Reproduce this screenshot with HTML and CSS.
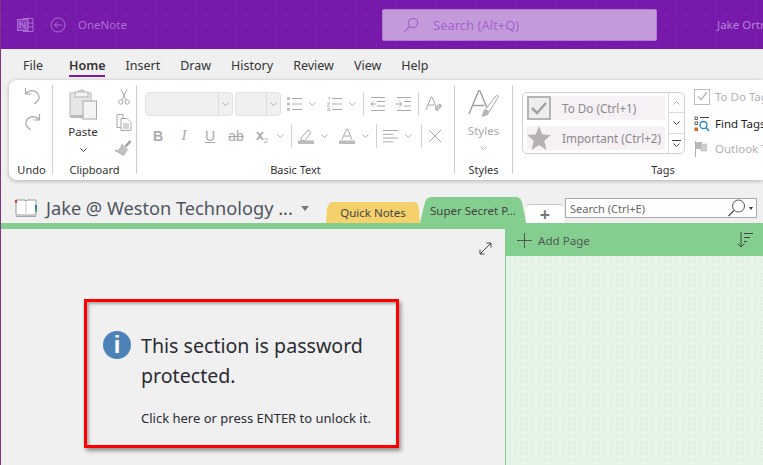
FILE: index.html
```html
<!DOCTYPE html>
<html lang="en">
<head>
    <meta charset="UTF-8">
    <title>OneNote</title>
    <link rel="stylesheet" href="styles.css">
</head>
<body>
    <header class="titlebar">
        <div class="brand">
            <svg class="logo" width="17" height="18" viewBox="0 0 17 18" fill="none" stroke="#a96fd0">
                <path d="M6 2.5h10v13H6" /><path d="M11 2.5v13M11 7h5M11 11h5" />
                <rect x="0.5" y="3.5" width="10" height="11" fill="#8a3cba" />
                <path d="M3 12V6l5 6V6" stroke-width="1.4" />
            </svg>
            <svg class="back" width="16" height="16" viewBox="0 0 16 16" fill="none" stroke="#a96fd0">
                <circle cx="8" cy="8" r="7" /><path d="M12 8H4.5M7.5 5l-3 3 3 3" />
            </svg>
            <span class="app-name">OneNote</span>
        </div>
        <div class="title-search">
            <svg width="16" height="16" viewBox="0 0 16 16" fill="none" stroke="#a461cf" stroke-width="1.2">
                <circle cx="10" cy="6" r="4.6" /><path d="M6.6 9.4L1.5 14.5" />
            </svg>
            <span>Search (Alt+Q)</span>
        </div>
        <span class="user">Jake Ortr</span>
    </header>

    <nav class="menu">
        <span>File</span>
        <span class="active">Home</span>
        <span>Insert</span>
        <span>Draw</span>
        <span>History</span>
        <span>Review</span>
        <span>View</span>
        <span>Help</span>
    </nav>

    <section class="ribbon">
        <div class="group undo">
            <div class="group-body">
                <svg width="17" height="18" viewBox="0 0 17 18" fill="none" stroke="#a8a8a8" stroke-width="1.2">
                    <path d="M1.5 1v6h6" /><path d="M1.5 7C4 3.500 9 2.500 13 5.500c3 3 3 6.500 0 9L10.500 17" />
                </svg>
                <svg width="17" height="18" viewBox="0 0 17 18" fill="none" stroke="#a8a8a8" stroke-width="1.2">
                    <path d="M15.500 1v6h-6" /><path d="M15.500 7C13 3.500 8 2.500 4 5.500c-3 3-3 6.500 0 9L6.500 17" />
                </svg>
            </div>
            <div class="group-label">Undo</div>
        </div>

        <div class="group clipboard">
            <div class="group-body">
                <div class="paste">
                    <svg width="28" height="31" viewBox="0 0 28 31">
                        <path d="M1 4h7l3-3h3l3 3h5v24H1z" fill="#e6e6e6" stroke="#b4b4b4" />
                        <rect x="6" y="3" width="13" height="5" fill="#f3f3f3" stroke="#b4b4b4" />
                        <rect x="2" y="26" width="14" height="3" fill="#b9b9b9" />
                        <rect x="14" y="12" width="13.500" height="18" fill="#f4f4f4" stroke="#a8a8a8" />
                    </svg>
                    <span class="paste-label">Paste</span>
                    <svg class="chev dark" width="7" height="4" viewBox="0 0 7 4"><path d="M.5.500l3 3 3-3" /></svg>
                </div>
                <div class="clip-tools">
                    <svg width="12" height="17" viewBox="0 0 12 17" fill="none" stroke="#a8a8a8">
                        <path d="M3 1l5 11M9 1L4 12" /><circle cx="2.800" cy="14" r="2.200" /><circle cx="9.200" cy="14" r="2.200" />
                    </svg>
                    <svg width="16" height="17" viewBox="0 0 16 17" fill="#fff" stroke="#a8a8a8">
                        <path d="M1 .5h6v13H1z" /><path d="M5 4.500h6l4 4v8H5z" /><path d="M7 10h6M7 12h6M7 14h6" />
                    </svg>
                    <svg width="17" height="16" viewBox="0 0 17 16">
                        <path d="M10.500 6.500L15.500 1" stroke="#a0a0a0" stroke-width="2.600" fill="none" />
                        <path d="M7 4.500l5.500 5L8.500 15.500 0 10.500c3 .5 5.500-1.500 7-6z" fill="#c8c8c8" stroke="#a8a8a8" stroke-width=".8" />
                        <path d="M4 12l4-4M7 14l3-4" stroke="#a8a8a8" stroke-width=".7" />
                    </svg>
                </div>
            </div>
            <div class="group-label">Clipboard</div>
        </div>

        <div class="group basic">
            <div class="group-body">
                <div class="tool-row top">
                    <div class="cluster combos">
                        <div class="combo wide"><i><svg class="chev" width="7" height="4" viewBox="0 0 7 4"><path d="M.5.500l3 3 3-3" /></svg></i></div>
                        <div class="combo narrow"><i><svg class="chev" width="7" height="4" viewBox="0 0 7 4"><path d="M.5.500l3 3 3-3" /></svg></i></div>
                    </div>
                    <div class="cluster">
                        <div class="split">
                            <svg width="15" height="14" viewBox="0 0 15 14" fill="none" stroke="#a8a8a8">
                                <path d="M5 1.500h10M5 7h10M5 12.500h10" /><path d="M0 1.500h3M0 7h3M0 12.500h3" stroke-width="2.600" stroke="#b8b8b8" />
                            </svg>
                            <svg class="chev" width="7" height="4" viewBox="0 0 7 4"><path d="M.5.500l3 3 3-3" /></svg>
                        </div>
                        <div class="split">
                            <svg width="15" height="14" viewBox="0 0 15 14" fill="none" stroke="#a8a8a8">
                                <path d="M5 1.500h10M5 7h10M5 12.500h10" /><path d="M1 .5h1.500v3M0 6h3L0 9h3M0 11h3l-1 1.200 1 1.300H0" stroke-width=".7" />
                            </svg>
                            <svg class="chev" width="7" height="4" viewBox="0 0 7 4"><path d="M.5.500l3 3 3-3" /></svg>
                        </div>
                    </div>
                    <span class="sep"></span>
                    <div class="cluster">
                        <svg width="15" height="14" viewBox="0 0 15 14" fill="none" stroke="#a8a8a8">
                            <path d="M1 .5h14M7 4.500h8M7 9h8M1 13.500h14M6 7H1M3.500 4.500L1 7l2.500 2.500" />
                        </svg>
                        <svg width="15" height="14" viewBox="0 0 15 14" fill="none" stroke="#a8a8a8">
                            <path d="M1 .5h14M8 4.500h7M8 9h7M1 13.500h14M0 7h6M3.500 4.500L6 7 3.500 9.500" />
                        </svg>
                    </div>
                    <span class="sep"></span>
                    <svg width="17" height="16" viewBox="0 0 17 16" fill="none" stroke="#a8a8a8">
                        <path d="M1 14L6 1h1l4 10M3 9h6" /><path d="M10 12l5-4 1.500 2-4 4.500h-1z" fill="#ccc" />
                    </svg>
                </div>
                <div class="tool-row">
                    <span class="fmt bold">B</span>
                    <span class="fmt italic">I</span>
                    <span class="fmt under">U</span>
                    <span class="fmt strike">ab</span>
                    <span class="fmt bold sub">x<small>2</small></span>
                    <svg class="chev after-sub" width="7" height="4" viewBox="0 0 7 4"><path d="M.5.500l3 3 3-3" /></svg>
                    <span class="sep tall"></span>
                    <div class="split">
                        <svg width="16" height="16" viewBox="0 0 16 16">
                            <path d="M3 10l7-8 3 2.500-6 8H3z" fill="none" stroke="#a8a8a8" />
                            <rect y="12.500" width="16" height="3.500" fill="#bcbcbc" />
                        </svg>
                        <svg class="chev" width="7" height="4" viewBox="0 0 7 4"><path d="M.5.500l3 3 3-3" /></svg>
                    </div>
                    <div class="split font-color">
                        <svg width="16" height="16" viewBox="0 0 16 16">
                            <path d="M3 11.500L7.500 1h1L13 11.500M5 8h6" fill="none" stroke="#a8a8a8" />
                            <rect y="12.500" width="16" height="3.500" fill="#bcbcbc" />
                        </svg>
                        <svg class="chev" width="7" height="4" viewBox="0 0 7 4"><path d="M.5.500l3 3 3-3" /></svg>
                    </div>
                    <span class="sep tall"></span>
                    <div class="split align">
                        <svg width="15" height="14" viewBox="0 0 15 14" fill="none" stroke="#a8a8a8">
                            <path d="M0 1.500h15M0 5.300h10M0 9h15M0 12.800h10" />
                        </svg>
                        <svg class="chev" width="7" height="4" viewBox="0 0 7 4"><path d="M.5.500l3 3 3-3" /></svg>
                    </div>
                    <span class="sep tall"></span>
                    <svg width="14" height="14" viewBox="0 0 14 14" fill="none" stroke="#a8a8a8"><path d="M1 1l12 12M13 1L1 13" /></svg>
                </div>
            </div>
            <div class="group-label">Basic Text</div>
        </div>

        <div class="group styles">
            <div class="group-body">
                <svg width="31" height="29" viewBox="0 0 31 29">
                    <path d="M1 24L10.500 1h1.500l7 17M4.500 15.500h12" fill="none" stroke="#a0a0a0" stroke-width="1.400" />
                    <path d="M17 20L28 6c2-1.500 2.500 0 2 1.500L21 22z" fill="#fff" stroke="#a8a8a8" />
                    <path d="M16 20c3-1 5 .5 5 2.500s-3 4-8 4c2-1.500 1.500-5 3-6.500z" fill="#b4b4b4" />
                </svg>
                <span class="styles-label">Styles</span>
                <svg class="chev" width="7" height="4" viewBox="0 0 7 4"><path d="M.5.500l3 3 3-3" /></svg>
            </div>
            <div class="group-label">Styles</div>
        </div>

        <div class="group tags">
            <div class="group-body">
                <div class="gallery">
                    <div class="gallery-items">
                        <div class="tag-item">
                            <span class="tag-check">
                                <svg width="20" height="20" viewBox="0 0 20 20" fill="none" stroke="#a0a0a0" stroke-width="2.500"><path d="M3 10l5 5 9-10" /></svg>
                            </span>
                            <span>To Do (Ctrl+1)</span>
                        </div>
                        <div class="tag-item">
                            <svg class="tag-star" width="24" height="24" viewBox="0 0 24 24"><path d="M12 0l3.300 8.400 8.700.6-6.700 5.700 2.100 9.300L12 19l-7.400 5 2.100-9.300L0 9l8.700-.6z" fill="#b4b0b4" /></svg>
                            <span>Important (Ctrl+2)</span>
                        </div>
                    </div>
                    <div class="gallery-scroll">
                        <span><svg class="chev" width="7" height="4" viewBox="0 0 7 4"><path d="M.5 3.500l3-3 3 3" /></svg></span>
                        <span><svg class="chev dark" width="7" height="4" viewBox="0 0 7 4"><path d="M.5.500l3 3 3-3" /></svg></span>
                        <span><svg class="more" width="9" height="7" viewBox="0 0 9 7" fill="none" stroke="#444"><path d="M0 .5h9M1.500 3.500L4.500 6.500l3-3" /></svg></span>
                    </div>
                </div>
                <div class="tag-actions">
                    <div class="tag-action off">
                        <span class="mini-check"><svg width="11" height="9" viewBox="0 0 11 9" fill="none" stroke="#b4b4b4" stroke-width="1.300"><path d="M1 4.500l3 3 6-7" /></svg></span>
                        <span>To Do Tag</span>
                    </div>
                    <div class="tag-action find">
                        <svg width="16" height="16" viewBox="0 0 16 16" fill="none">
                            <path d="M6 1.500h9" stroke="#444" /><rect x="1" y="1" width="2.500" height="2.500" stroke="#444" stroke-width=".8" />
                            <rect x="1" y="6" width="2.500" height="2.500" stroke="#444" stroke-width=".8" />
                            <rect x=".5" y="11.500" width="3.500" height="3.500" fill="#d8641e" />
                            <circle cx="9.500" cy="9" r="3.500" stroke="#1c8ad6" stroke-width="1.300" /><path d="M12 11.500l3 3.500" stroke="#1c8ad6" stroke-width="1.500" />
                        </svg>
                        <span>Find Tags</span>
                    </div>
                    <div class="tag-action off">
                        <svg width="16" height="16" viewBox="0 0 16 16">
                            <path d="M1.500 0v16" stroke="#b0b0b0" /><rect x="2" y="1" width="6" height="7" fill="#b8b8b8" /><rect x="7" y="3" width="5.500" height="7" fill="#d0d0d0" stroke="#b8b8b8" stroke-width=".6" />
                        </svg>
                        <span>Outlook Tasks</span>
                    </div>
                </div>
            </div>
            <div class="group-label">Tags</div>
        </div>
    </section>

    <section class="notebook-bar">
        <div class="notebook">
            <svg width="22" height="19" viewBox="0 0 22 19">
                <path d="M1 1h9l1 1 1-1h9v15H12l-1 1-1-1H1z" fill="#fff" stroke="#9a9a9a" />
                <path d="M11 2v15" stroke="#c8c8c8" />
                <rect y="1" width="2" height="3" fill="#d8401e" />
                <rect x="20" y="6" width="2" height="4" fill="#3a78b8" />
                <rect x="20" y="10" width="2" height="3" fill="#58a070" />
                <path d="M1 17.500h20" stroke="#a8a8a8" />
            </svg>
            <span class="notebook-name">Jake @ Weston Technology ...</span>
            <span class="caret"></span>
        </div>
        <div class="tabs">
            <div class="tab yellow">Quick Notes</div>
            <div class="tab green">Super Secret P...</div>
            <div class="tab add">+</div>
        </div>
        <div class="section-search">
            <span>Search (Ctrl+E)</span>
            <svg width="20" height="18" viewBox="0 0 20 18" fill="none" stroke="#555">
                <circle cx="11.500" cy="7" r="6" /><path d="M7 11.500L1.500 17" stroke-width="1.400" />
            </svg>
            <span class="caret small"></span>
        </div>
    </section>

    <main class="workspace">
        <div class="page-area">
            <svg class="expand" width="13" height="13" viewBox="0 0 13 13" fill="none" stroke="#444">
                <path d="M1 12L12 1M7.500 1H12v4.500M1 7.500V12h4.500" />
            </svg>
            <div class="locked">
                <div class="locked-head">
                    <span class="info-icon">i</span>
                    <p>This section is password protected.</p>
                </div>
                <p class="locked-hint">Click here or press ENTER to unlock it.</p>
            </div>
        </div>
        <aside class="pages">
            <div class="pages-head">
                <svg width="15" height="15" viewBox="0 0 15 15" stroke="#555"><path d="M7.500 0v15M0 7.500h15" /></svg>
                <span>Add Page</span>
                <svg class="sort" width="16" height="16" viewBox="0 0 16 16" fill="none" stroke="#444">
                    <path d="M4 0v15M.5 11.500L4 15l3.500-3.500M7 1.500h9M7 5.500h6M7 9.500h3" />
                </svg>
            </div>
        </aside>
    </main>
</body>
</html>
```

FILE: styles.css
```css
:root {
    --purple: #7719aa;
    --green: #84cf8f;
    --line: #cfcfcf;
    --off: #a9a9a9;
}

html, body {
    margin: 0;
    height: 465px;
    overflow: hidden;
}

body {
    width: 762px;
    border-left: 1px solid #85327f;
    background: #f0f0f0;
    font-family: "Noto Sans", "Open Sans", sans-serif;
    font-size: 12px;
    color: #333;
}

p {
    margin: 0;
}

/* title bar */
.titlebar {
    display: flex;
    align-items: center;
    height: 49px;
    overflow: hidden;
    background-color: var(--purple);
    background-image: radial-gradient(rgba(255, 255, 255, 0.1) 0.6px, transparent 0.8px);
    background-size: 10px 10px;
}

.brand {
    display: flex;
    flex-shrink: 0;
    align-items: center;
    width: 381px;
    padding-left: 16px;
    box-sizing: border-box;
}

.back {
    margin-left: 16px;
}

.app-name {
    margin-left: 12px;
    font-size: 11.5px;
    color: #ab70d2;
}

.title-search {
    display: flex;
    flex-shrink: 0;
    align-items: center;
    gap: 14px;
    width: 275px;
    height: 32px;
    padding-left: 20px;
    box-sizing: border-box;
    background: #c49bda;
    border: 1px solid #b27fd0;
    border-radius: 2px;
    font-size: 13px;
    color: #a461cf;
}

.user {
    flex-shrink: 0;
    margin-left: 60px;
    font-size: 11.5px;
    color: #b582d6;
    white-space: nowrap;
}

/* tab strip */
.menu {
    display: flex;
    align-items: center;
    gap: 20px;
    height: 31px;
    padding: 1px 0 0 22px;
    box-sizing: border-box;
    font-size: 12.5px;
    color: #333;
}

.menu .active {
    position: relative;
    margin-left: 6px;
    font-weight: 600;
}

.menu .active::after {
    content: "";
    position: absolute;
    left: 0;
    right: 0;
    bottom: -3px;
    height: 2px;
    background: var(--purple);
}

/* ribbon */
.ribbon {
    display: flex;
    height: 100px;
    margin-left: 8px;
    padding: 5px 0 6px;
    box-sizing: border-box;
    background: #fff;
    border-radius: 8px 0 0 8px;
    box-shadow: 0 1px 4px rgba(0, 0, 0, 0.28);
}

.group {
    display: flex;
    flex-direction: column;
    flex-shrink: 0;
    box-sizing: border-box;
    border-right: 1px solid var(--line);
}

.group-body {
    height: 77px;
}

.group-label {
    height: 16px;
    margin-bottom: -4px;
    line-height: 16px;
    text-align: center;
    font-size: 11px;
    color: #333;
}

.chev {
    flex-shrink: 0;
    fill: none;
    stroke: #b0b0b0;
}

.chev.dark {
    stroke: #444;
}

.undo {
    width: 44px;
    padding-left: 2px;
}

.undo .group-body {
    display: flex;
    flex-direction: column;
    align-items: center;
    gap: 8px;
    padding: 2px 0 0 2px;
    height: 75px;
}

.clipboard {
    width: 84px;
}

.clipboard .group-body {
    display: flex;
}

.paste {
    display: flex;
    flex-direction: column;
    align-items: center;
    width: 46px;
    margin-left: 7px;
    padding-top: 4px;
}

.paste-label {
    margin-top: 3px;
    line-height: 18px;
    font-size: 11.5px;
}

.paste .chev {
    margin-top: 7px;
}

.clip-tools {
    display: flex;
    flex-direction: column;
    align-items: center;
    gap: 9px;
    width: 17px;
    margin-left: 9px;
    padding-top: 3px;
}

.basic {
    width: 318px;
}

.tool-row {
    display: flex;
    align-items: center;
    height: 23px;
    margin-top: 1px;
}

.tool-row.top {
    height: 24px;
    margin-top: 7px;
    margin-bottom: 8px;
    margin-left: 8px;
}

.cluster {
    display: flex;
    align-items: center;
    gap: 11px;
}

.combos {
    gap: 2px;
    margin-right: 6px;
}

.combo {
    display: flex;
    justify-content: flex-end;
    height: 24px;
    box-sizing: border-box;
    background: #f0f0f0;
    border: 1px solid #e0e0e0;
    border-radius: 4px;
}

.combo.wide {
    width: 88px;
}

.combo.narrow {
    width: 46px;
}

.combo i {
    display: flex;
    align-items: center;
    justify-content: center;
    width: 13px;
    border-left: 1px solid #dcdcdc;
}

.split {
    display: flex;
    align-items: center;
    gap: 7px;
}

.sep {
    width: 1px;
    height: 24px;
    margin: 0 6px 0 7px;
    background: var(--line);
}

.fmt {
    width: 26px;
    text-align: center;
    font-family: "Liberation Sans", sans-serif;
    font-size: 14px;
    color: var(--off);
}

.fmt:first-child {
    margin-left: 8px;
}

.bold {
    font-weight: 700;
}

.italic {
    font-style: italic;
    font-family: "Liberation Serif", serif;
    font-size: 15px;
}

.under {
    text-decoration: underline;
}

.strike {
    text-decoration: line-through;
}

.sub small {
    font-size: 8px;
    font-weight: 400;
    vertical-align: -3px;
}

.after-sub {
    margin-left: 2px;
}

.font-color {
    margin-left: 11px;
}

.align {
    margin-right: 2px;
}

.styles {
    width: 58px;
}

.styles .group-body {
    display: flex;
    flex-direction: column;
    align-items: center;
    padding-top: 5px;
    height: 72px;
}

.styles-label {
    margin-top: 3px;
    line-height: 18px;
    font-size: 11.5px;
    color: var(--off);
}

.styles .chev {
    margin-top: 6px;
}

.tags {
    width: 300px;
    border-right: none;
}

.tags .group-body {
    display: flex;
    padding-left: 9px;
}

.gallery {
    display: flex;
    flex-shrink: 0;
    width: 163px;
    height: 62px;
    margin-top: 7px;
    box-sizing: border-box;
    border: 1px solid #cfcfcf;
    border-radius: 5px;
}

.gallery-items {
    display: flex;
    flex-direction: column;
    gap: 6px;
    width: 139px;
    margin: 3px 0 0 4px;
}

.tag-item {
    display: flex;
    align-items: center;
    gap: 11px;
    height: 24px;
    background: #f5f1f5;
    font-size: 11.7px;
    color: #8a8a8a;
}

.tag-check {
    display: flex;
    align-items: center;
    justify-content: center;
    width: 24px;
    height: 24px;
    box-sizing: border-box;
    background: #eee;
    border: 2px solid #b4b4b4;
}

.gallery-scroll {
    display: flex;
    flex-direction: column;
    width: 15px;
    margin-left: 3px;
    border-left: 1px solid #dcdcdc;
}

.gallery-scroll span {
    display: flex;
    flex: 1;
    align-items: center;
    justify-content: center;
    border-bottom: 1px solid #dcdcdc;
}

.gallery-scroll span:last-child {
    border-bottom: none;
}

.tag-actions {
    display: flex;
    flex-direction: column;
    gap: 8px;
    margin-left: 9px;
    padding-top: 3px;
}

.tag-action {
    display: flex;
    align-items: center;
    gap: 5px;
    height: 17px;
    white-space: nowrap;
    font-size: 11.5px;
    color: #222;
}

.tag-action.find {
    margin-top: 2px;
}

.tag-action.off {
    color: #b0b0b0;
}

.mini-check {
    display: flex;
    align-items: center;
    justify-content: center;
    width: 16px;
    height: 16px;
    box-sizing: border-box;
    border: 1px solid #bdbdbd;
}

/* notebook and section tabs */
.notebook-bar {
    display: flex;
    align-items: flex-end;
    height: 43px;
}

.notebook {
    display: flex;
    flex-shrink: 0;
    align-items: center;
    gap: 9px;
    width: 325px;
    height: 30px;
    padding-left: 14px;
    box-sizing: border-box;
}

.notebook-name {
    font-size: 18.2px;
    color: #4f5560;
    white-space: nowrap;
}

.caret {
    flex-shrink: 0;
    margin-left: -1px;
    border-left: 4.500px solid transparent;
    border-right: 4.500px solid transparent;
    border-top: 5px solid #777;
}

.caret.small {
    margin-left: 2px;
    border-left-width: 2.500px;
    border-right-width: 2.500px;
    border-top: 3px solid #333;
}

.tabs {
    display: flex;
    flex-shrink: 0;
    align-items: flex-end;
}

.tab {
    display: flex;
    align-items: center;
    justify-content: center;
    box-sizing: border-box;
    font-size: 11.500px;
    color: #444;
    white-space: nowrap;
}

.tab.yellow {
    width: 94px;
    height: 21px;
    background: #f5d16c;
    clip-path: polygon(0 100%, 1px 6px, 3px 2px, 6px 0, 88px 0, 91px 1px, 92.500px 4px, 100% 100%);
}

.tab.green {
    width: 106px;
    height: 26px;
    background: var(--green);
    clip-path: polygon(0 100%, 5px 5px, 7px 1.500px, 11px 0, 97px 0, 100px 1.500px, 102px 5px, 100% 100%);
}

.tab.add {
    width: 38px;
    height: 19px;
    background: #fff;
    border-top: 1px solid #c8c8c8;
    border-radius: 4px 4px 0 0;
    font-size: 18px;
    font-weight: 700;
    color: #777;
}

.section-search {
    display: flex;
    flex-shrink: 0;
    align-items: center;
    width: 192px;
    height: 20px;
    margin: 0 0 5px 1px;
    padding: 0 3px 0 4px;
    box-sizing: border-box;
    background: #fff;
    border: 1px solid #a8a8a8;
    font-size: 11px;
    color: #666;
}

.section-search span:first-child {
    flex: 1;
}

/* content area */
.workspace {
    display: flex;
    height: 236px;
    border-top: 6px solid var(--green);
}

.page-area {
    position: relative;
    width: 504px;
    padding: 70px 0 0 83px;
    box-sizing: border-box;
}

.expand {
    position: absolute;
    top: 13px;
    right: 13px;
}

.locked {
    width: 315px;
    height: 149px;
    padding: 29px 0 0 16px;
    box-sizing: border-box;
    border: 3px solid #f00;
    box-shadow: 2px 3px 4px rgba(0, 0, 0, 0.4), inset 2px 2px 3px rgba(0, 0, 0, 0.3);
}

.locked-head {
    display: flex;
    gap: 10px;
    font-size: 19.6px;
    line-height: 30px;
    color: #2b2b33;
}

.info-icon {
    flex-shrink: 0;
    width: 28px;
    height: 28px;
    line-height: 28px;
    text-align: center;
    border-radius: 50%;
    background: #4d82b8;
    color: #fff;
    font-family: "Liberation Sans", sans-serif;
    font-size: 24px;
    font-weight: 700;
}

.locked-head p {
    width: 240px;
}

.locked-hint {
    margin: 18px 0 0 38px;
    font-size: 13px;
    line-height: 18px;
    color: #2b2b33;
    white-space: nowrap;
}

.pages {
    flex: 1;
    border-left: 1px solid var(--green);
    background-color: #e6f4e8;
    background-image: radial-gradient(rgba(120, 190, 130, 0.22) 0.6px, transparent 0.8px);
    background-size: 6px 6px;
}

.pages-head {
    display: flex;
    align-items: center;
    height: 27px;
    padding: 0 10px 5px 11px;
    box-sizing: border-box;
    background: var(--green);
    font-size: 11.6px;
    color: #555;
}

.pages-head span {
    margin-left: 6px;
}

.sort {
    margin-left: auto;
}
```
